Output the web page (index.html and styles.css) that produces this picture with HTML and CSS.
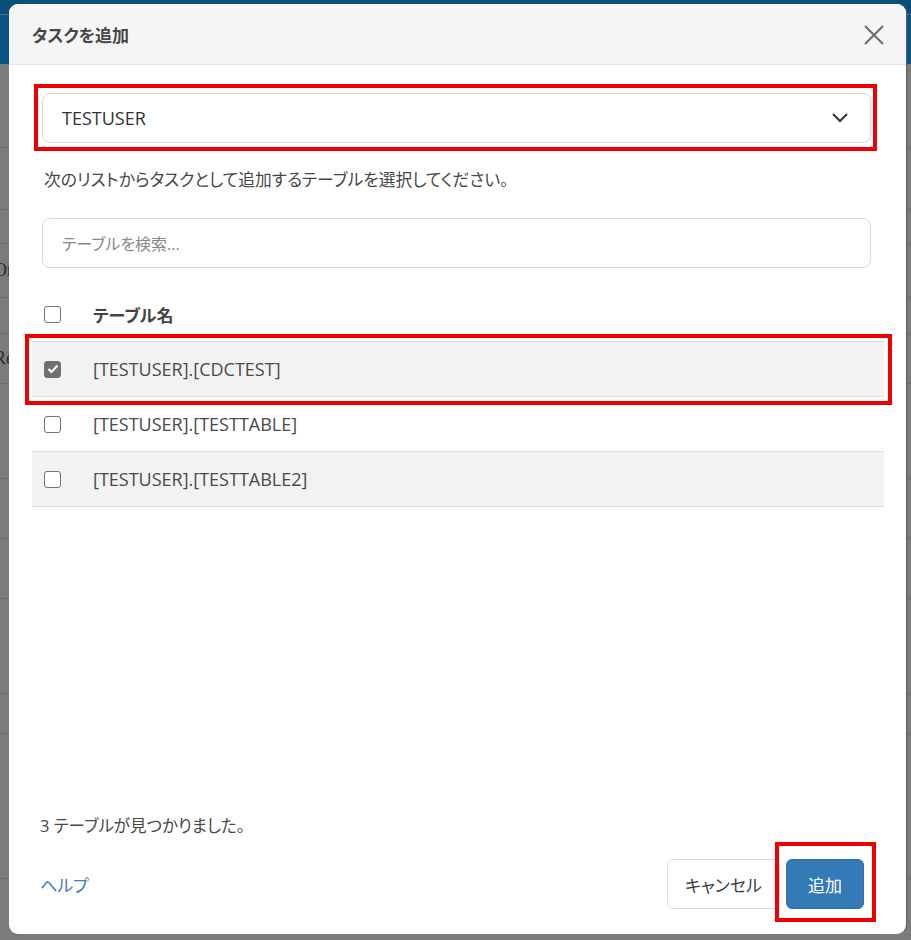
FILE: index.html
```html
<!DOCTYPE html>
<html lang="ja">

<head>
    <meta charset="UTF-8">
    <meta name="viewport" content="width=device-width, initial-scale=1.0">
    <title>タスクを追加</title>
    <link rel="stylesheet" href="styles.css">
</head>

<body>
    <!-- dimmed page behind the dialog -->
    <div class="page">
        <div class="topbar"></div>
        <div class="grid-row" style="height: 84px"></div>
        <div class="grid-row" style="height: 62px"></div>
        <div class="grid-row" style="height: 34px"></div>
        <div class="grid-row" style="height: 54px"><span class="cell-text">Or</span></div>
        <div class="grid-row" style="height: 36px"></div>
        <div class="grid-row" style="height: 50px"><span class="cell-text">Re</span></div>
        <div class="grid-row" style="height: 95px"></div>
        <div class="grid-row" style="height: 60px"></div>
        <div class="grid-row" style="height: 60px"></div>
        <div class="grid-row" style="height: 95px"></div>
        <div class="grid-row" style="height: 40px"><span class="cell-text">I</span></div>
        <div class="grid-row" style="height: 145px"></div>
    </div>

    <div class="modal">
        <div class="modal-header">
            <h4 class="modal-title">タスクを追加</h4>
            <button class="close-btn" aria-label="閉じる">
                <svg width="20" height="20" viewBox="0 0 20 20">
                    <path d="M1 1 L19 19 M19 1 L1 19" stroke="#6b6b6b" stroke-width="2" fill="none" />
                </svg>
            </button>
        </div>

        <div class="modal-body">
            <div class="marked marked-select">
                <div class="select">
                    <span>TESTUSER</span>
                    <svg width="16" height="10" viewBox="0 0 16 10">
                        <path d="M1 1 L8 8 L15 1" stroke="#333" stroke-width="2" fill="none" />
                    </svg>
                </div>
            </div>

            <p class="hint">次のリストからタスクとして追加するテーブルを選択してください。</p>

            <div class="search">テーブルを検索...</div>

            <div class="table">
                <div class="row head">
                    <span class="check"></span>
                    <span class="name">テーブル名</span>
                </div>
                <div class="row striped marked marked-row">
                    <span class="check on">
                        <svg width="12" height="10" viewBox="0 0 12 10">
                            <path d="M1.5 5 L4.5 8 L10.5 1.5" stroke="#fff" stroke-width="2.2" fill="none" />
                        </svg>
                    </span>
                    <span class="name">[TESTUSER].[CDCTEST]</span>
                </div>
                <div class="row">
                    <span class="check"></span>
                    <span class="name">[TESTUSER].[TESTTABLE]</span>
                </div>
                <div class="row striped last">
                    <span class="check"></span>
                    <span class="name">[TESTUSER].[TESTTABLE2]</span>
                </div>
            </div>
        </div>

        <div class="modal-footer">
            <p class="count">3 テーブルが見つかりました。</p>
            <div class="actions">
                <a class="help" href="#">ヘルプ</a>
                <div class="buttons">
                    <button class="btn btn-default">キャンセル</button>
                    <button class="btn btn-primary marked marked-btn">追加</button>
                </div>
            </div>
        </div>
    </div>
</body>

</html>
```

FILE: styles.css
```css
* {
    box-sizing: border-box;
}

body {
    margin: 0;
    width: 911px;
    height: 940px;
    overflow: hidden;
    position: relative;
    font-family: "Open Sans", "Noto Sans CJK JP", sans-serif;
    color: #444;
    background-color: #7b7b7b;
}

/* page behind the overlay */
.page {
    width: 100%;
}

.topbar {
    height: 64px;
    background-color: #0b5584;
    border-top: 14px solid #0a4e7a;
    box-shadow: inset 0 1px 0 #3f7aa3;
}

.grid-row {
    border-bottom: 1px solid #6c6c6c;
    display: flex;
    align-items: center;
}

.cell-text {
    font-family: "Liberation Serif", serif;
    font-size: 18px;
    color: #2a2a2a;
    margin-left: -6px;
}

/* dialog */
.modal {
    position: absolute;
    top: 4px;
    left: 9px;
    width: 897px;
    height: 930px;
    background-color: #fff;
    border-radius: 9px;
    overflow: hidden;
    display: flex;
    flex-direction: column;
    box-shadow: 1px 0 0 #5e5e5e;
}

.modal-header {
    height: 61px;
    flex-shrink: 0;
    background-color: #f5f5f5;
    border-bottom: 1px solid #e3e3e3;
    display: flex;
    align-items: center;
    justify-content: space-between;
    padding: 0 22px 0 23px;
}

.modal-title {
    margin: 0;
    font-size: 17px;
    font-weight: 700;
    color: #474747;
    font-feature-settings: "palt";
}

.close-btn {
    border: none;
    background: none;
    padding: 0;
    width: 20px;
    height: 20px;
    display: flex;
    margin-top: 1px;
}

.modal-body {
    flex: 1;
    padding: 28px 22px 0 23px;
}

/* red annotation frames */
.marked {
    position: relative;
}

.marked::after {
    content: "";
    position: absolute;
    border: 4px solid #ee0000;
    pointer-events: none;
}

.marked-select {
    margin: 0 13px 0 10px;
}

.marked-select::after {
    top: -9px;
    bottom: -8px;
    left: -8px;
    right: -6px;
}

.marked-row::after {
    top: -8px;
    bottom: -9px;
    left: -7px;
    right: -8px;
}

.marked-btn::after {
    top: -18px;
    bottom: -14px;
    left: -12px;
    right: -13px;
}

.select {
    height: 50px;
    border: 1px solid #dadada;
    border-radius: 8px;
    display: flex;
    align-items: center;
    justify-content: space-between;
    padding: 0 22px 0 19px;
    font-size: 18px;
    color: #333;
}

.hint {
    margin: 25px 0 0 12px;
    font-size: 16.8px;
    line-height: 24px;
    color: #474747;
    font-feature-settings: "palt";
}

.search {
    margin: 26px 13px 0 10px;
    height: 50px;
    border: 1px solid #dadada;
    border-radius: 8px;
    padding: 0 19px;
    display: flex;
    align-items: center;
    font-size: 16px;
    color: #888;
    font-feature-settings: "palt";
}

.table {
    margin-top: 19px;
}

.row {
    display: grid;
    grid-template-columns: 61px 1fr;
    align-items: center;
    height: 55px;
    border-top: 1px solid #dcdcdc;
    font-size: 18px;
    color: #4a4a4a;
}

.row.head {
    border-top: none;
    height: 54px;
    font-size: 17px;
    font-weight: 700;
    color: #444;
}

.row.head .name {
    font-feature-settings: "palt";
}

.row.striped {
    background-color: #f2f2f2;
}

.row.last {
    border-bottom: 1px solid #dcdcdc;
    height: 56px;
}

.check {
    margin-left: 12px;
    width: 17px;
    height: 17px;
    border: 1.5px solid #737373;
    border-radius: 3px;
    background-color: #fff;
    display: flex;
    align-items: center;
    justify-content: center;
}

.check.on {
    background-color: #6f6f6f;
    border-color: #6f6f6f;
}

.modal-footer {
    flex-shrink: 0;
    padding: 0 42px 25px 31px;
}

.count {
    margin: 0 0 21px;
    font-size: 16.5px;
    line-height: 24px;
    color: #474747;
    font-feature-settings: "palt";
}

.actions {
    display: flex;
    align-items: center;
    justify-content: space-between;
}

.help {
    font-size: 17px;
    color: #3b7bbb;
    text-decoration: none;
    font-feature-settings: "palt";
}

.buttons {
    display: flex;
    gap: 6px;
}

.btn {
    height: 50px;
    border-radius: 6px;
    font-family: "Noto Sans CJK JP", sans-serif;
    font-size: 17px;
    font-feature-settings: "palt";
    padding: 0;
    white-space: nowrap;
}

.btn-default {
    background-color: #fff;
    border: 1px solid #dcdcdc;
    color: #3a3a3a;
    width: 113px;
}

.btn-primary {
    background-color: #347ab7;
    border: 1px solid #2f70a8;
    color: #fff;
    width: 78px;
}
```
